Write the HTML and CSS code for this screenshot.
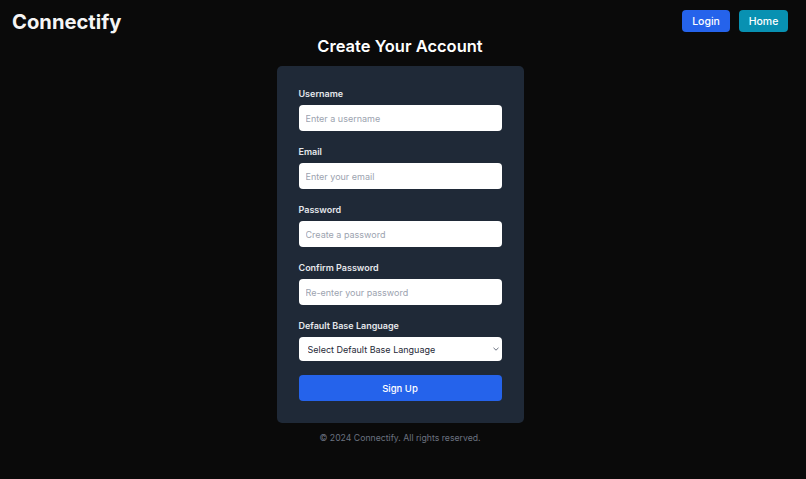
FILE: index.html
```html
<!DOCTYPE html>
<html lang="en">
<head>
<meta charset="UTF-8" />
<meta name="viewport" content="width=device-width, initial-scale=1" />
<title>Connectify - Sign Up</title>
<link rel="stylesheet" href="styles.css">
</head>
<body>

<header class="topbar">
  <div class="brand">Connectify</div>
  <nav class="nav">
    <a href="#" class="nav-btn login">Login</a>
    <a href="#" class="nav-btn home">Home</a>
  </nav>
</header>

<main class="main">
  <h1 class="title">Create Your Account</h1>

  <form class="card">
    <div class="field">
      <label for="username">Username</label>
      <input id="username" type="text" placeholder="Enter a username">
    </div>
    <div class="field">
      <label for="email">Email</label>
      <input id="email" type="email" placeholder="Enter your email">
    </div>
    <div class="field">
      <label for="password">Password</label>
      <input id="password" type="password" placeholder="Create a password">
    </div>
    <div class="field">
      <label for="confirm">Confirm Password</label>
      <input id="confirm" type="password" placeholder="Re-enter your password">
    </div>
    <div class="field">
      <label for="lang">Default Base Language</label>
      <div class="select-wrap">
        <select id="lang">
          <option>Select Default Base Language</option>
        </select>
        <svg class="chevron" width="6" height="4" viewBox="0 0 6 4"><path d="M0.5 0.8 L3 3.2 L5.5 0.8" fill="none" stroke="#6b7280" stroke-width="1"/></svg>
      </div>
    </div>
    <button type="submit" class="submit">Sign Up</button>
  </form>

  <footer class="footer">&copy; 2024 Connectify. All rights reserved.</footer>
</main>

</body>
</html>
```

FILE: styles.css
```css
body {
  margin: 0;
  min-height: 100vh;
  background: #0a0a0a;
  font-family: Inter, 'Liberation Sans', Arial, sans-serif;
  color: #f3f4f6;
}

.topbar {
  display: flex;
  justify-content: space-between;
  align-items: center;
  padding: 9px 18px 0 12px;
  height: 24px;
}

.brand {
  font-size: 20.2px;
  font-weight: 700;
  color: #f5f5f5;
}

.nav {
  display: flex;
  gap: 9px;
}

.nav-btn {
  display: flex;
  align-items: center;
  justify-content: center;
  box-sizing: border-box;
  height: 22px;
  border-radius: 4px;
  font-size: 10.5px;
  font-weight: 500;
  color: white;
  text-decoration: none;
}

.nav-btn.login {
  background: #2563eb;
  width: 48px;
}

.nav-btn.home {
  background: #0891b2;
  width: 49px;
}

.main {
  display: flex;
  flex-direction: column;
  align-items: center;
  padding-right: 6px;
}

.title {
  margin: 3px 0 10px;
  font-size: 16.5px;
  font-weight: 600;
  color: #ffffff;
}

.card {
  width: 203px;
  padding: 22px;
  background: #1f2937;
  border-radius: 5px;
  display: flex;
  flex-direction: column;
  gap: 15px;
}

.field {
  display: flex;
  flex-direction: column;
  gap: 6px;
}

.field label {
  font-size: 9px;
  font-weight: 600;
  color: #e5e7eb;
}

.field input,
.field select {
  box-sizing: border-box;
  width: 100%;
  height: 26px;
  border: none;
  border-radius: 4px;
  padding: 0 7px;
  background: #ffffff;
  font-family: Inter, 'Liberation Sans', Arial, sans-serif;
  font-size: 9px;
  color: #111827;
  outline: none;
}

.field input::placeholder {
  color: #9ca3af;
}

.select-wrap {
  position: relative;
}

.field select {
  display: block;
  height: 24px;
  padding: 0 9px;
  appearance: none;
  -webkit-appearance: none;
  color: #1f2937;
}

.chevron {
  position: absolute;
  right: 3px;
  top: 10px;
}

.submit {
  height: 26px;
  margin-top: -1px;
  border: none;
  border-radius: 4px;
  background: #2563eb;
  color: #ffffff;
  font-family: Inter, 'Liberation Sans', Arial, sans-serif;
  font-size: 9.5px;
  font-weight: 500;
  cursor: pointer;
}

.footer {
  margin-top: 10px;
  font-size: 8.7px;
  color: #6b7280;
}
```
